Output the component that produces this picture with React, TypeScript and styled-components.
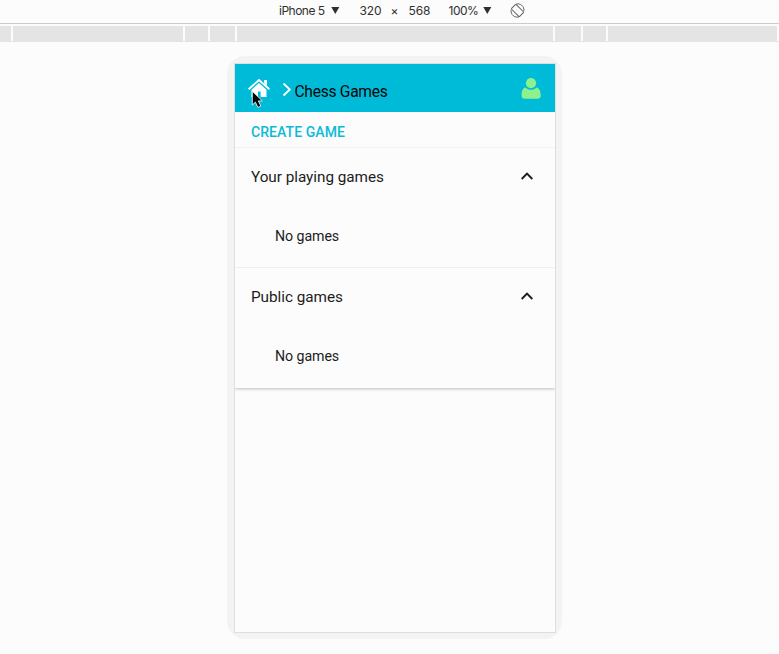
import React from 'react';
import styled, { createGlobalStyle } from 'styled-components';

const GlobalStyle = createGlobalStyle`
  * { box-sizing: border-box; }
  html, body { margin: 0; background: #fcfcfc; overflow: hidden; }
`;

const Page = styled.div`
  height: 654px;
  display: flex;
  flex-direction: column;
  align-items: center;
  background: #fcfcfc;
  font-family: Roboto, "Liberation Sans", sans-serif;
`;

const DeviceToolbar = styled.div`
  width: 100%;
  height: 24px;
  flex: none;
  display: flex;
  padding-left: 279px;
  border-bottom: 1px solid #cbcbcb;
  font: 12px/22px Inter, "Liberation Sans", sans-serif;
  color: #303030;
`;

const ToolLabel = styled.span<{ $width: number; $spacing?: number }>`
  flex: none;
  width: ${(p) => p.$width}px;
  letter-spacing: ${(p) => p.$spacing ?? 0}px;
  white-space: nowrap;
`;

const ToolIcon = styled.svg<{ $top: number; $gap?: number }>`
  display: block;
  flex: none;
  margin-top: ${(p) => p.$top}px;
  margin-right: ${(p) => p.$gap ?? 0}px;
`;

const BreakpointBar = styled.div`
  width: 100%;
  height: 16px;
  flex: none;
  margin-top: 2px;
  display: flex;
  gap: 2px;
  border-bottom: 1px solid #e4e4e4;
`;

const Breakpoint = styled.div<{ $width: number }>`
  flex: none;
  width: ${(p) => p.$width}px;
  background: #e4e4e4;
`;

const PhoneFrame = styled.div`
  width: 335px;
  height: 583px;
  flex: none;
  margin: 14px 0 0 10px;
  padding: 7px 6px 6px 7px;
  border-radius: 18px;
  background: #f3f3f3;
`;

const Screen = styled.div`
  width: 322px;
  height: 570px;
  border: 1px solid #dedede;
  background: #fcfcfc;
`;

const AppBar = styled.header`
  height: 48px;
  display: flex;
  background: #00bbd8;
`;

const HomeLink = styled.div`
  position: relative;
  width: 24px;
  height: 24px;
  margin: 13px 0 0 12px;
`;

const Pointer = styled.svg`
  position: absolute;
  left: 4px;
  top: 13px;
`;

const BarIcon = styled.svg<{ $top: number; $left: number }>`
  display: block;
  flex: none;
  margin: ${(p) => p.$top}px 0 0 ${(p) => p.$left}px;
`;

const Title = styled.h1`
  flex: 1;
  margin: 4px 0 0 2.5px;
  font-size: 15.6px;
  font-weight: 400;
  letter-spacing: -0.28px;
  line-height: 48px;
  color: #050505;
`;

const Card = styled.main`
  height: 276px;
  box-shadow: 0 1px 3px rgba(0, 0, 0, 0.25);
  clip-path: inset(0 0 -4px 0);
`;

const CreateButton = styled.button`
  display: block;
  width: 100%;
  height: 36px;
  padding: 5px 16px 0;
  border: 0;
  border-bottom: 1px solid #f1f1f1;
  background: none;
  text-align: left;
  font: 500 14px/31px Roboto, "Liberation Sans", sans-serif;
  letter-spacing: 0.07px;
  color: #0abbd6;
`;

const Section = styled.section`
  height: 120px;
  &:not(:last-child) { border-bottom: 1px solid #f0f0f0; }
`;

const SectionHeader = styled.div`
  height: 57px;
  display: flex;
  align-items: center;
  justify-content: space-between;
  padding: 0 21px 0 16px;
  font-size: 15.3px;
  letter-spacing: -0.03px;
  color: #1c1c1c;
`;

const EmptyText = styled.div`
  padding: 3px 0 0 40px;
  font-size: 14.2px;
  letter-spacing: -0.08px;
  line-height: 57px;
  color: #1c1c1c;
`;

const DropArrow = ({ gap }: { gap: number }) => (
  <ToolIcon $top={7} $gap={gap} width="9" height="8" viewBox="0 0 9 8">
    <path d="M.3 0h8L4.3 7z" fill="#303030" />
  </ToolIcon>
);

const GameSection = ({ title }: { title: string }) => (
  <Section>
    <SectionHeader>
      {title}
      <svg width="13" height="9" viewBox="0 0 13 9">
        <path d="M.7 7 6 1.7 11.300 7" fill="none" stroke="#1c1c1c" strokeWidth="1.9" />
      </svg>
    </SectionHeader>
    <EmptyText>No games</EmptyText>
  </Section>
);

const segments = [11, 170, 23, 25, 316, 26, 23, 169];

export default function App() {
  return (
    <Page>
      <GlobalStyle />
      <DeviceToolbar>
        <ToolLabel $width={51.5} $spacing={-0.5}>iPhone 5</ToolLabel>
        <DropArrow gap={20} />
        <ToolLabel $width={31} $spacing={-0.1}>320</ToolLabel>
        <ToolLabel $width={18}>×</ToolLabel>
        <ToolLabel $width={40} $spacing={-0.1}>568</ToolLabel>
        <ToolLabel $width={34.5} $spacing={-0.5}>100%</ToolLabel>
        <DropArrow gap={18} />
        <ToolIcon $top={3} width="15" height="15" viewBox="0 0 15 15" fill="none" stroke="#606060" strokeWidth="1">
          <rect x="4.2" y="1.8" width="6.6" height="11.4" rx="1" transform="rotate(-45 7.5 7.5)" />
          <path d="M6 1.1C10.5-.1 14.4 3.3 13.9 8M9 13.9C4.5 15.100.6 11.7 1.1 7" />
        </ToolIcon>
      </DeviceToolbar>
      <BreakpointBar>
        {segments.map((width, i) => <Breakpoint key={i} $width={width} />)}
      </BreakpointBar>
      <PhoneFrame>
        <Screen>
          <AppBar>
            <HomeLink>
              <svg width="24" height="24" viewBox="0 0 24 24">
                <path d="m1.6 12.200 10.400-9.200 10.400 9.200" fill="none" stroke="#fff" strokeWidth="1.9" />
                <path d="M17.200 3h2.800v6l-2.800-2.500zM12 6.100l7.500 6.600V20h-5.900v-5.500H11V20H4.500v-7.300z" fill="#fff" />
              </svg>
              <Pointer width="14" height="20" viewBox="0 0 14 20">
                <path d="M1.3 1.200v13.800l3.100-2.900 2.500 5.300 2.900-1.300-2.500-5.200h4z" fill="#050505" stroke="#fff" strokeWidth="0.8" />
              </Pointer>
            </HomeLink>
            <BarIcon $top={18} $left={11} width="10" height="15" viewBox="0 0 10 15">
              <path d="m1.5 1.5 6.3 6-6.300 6" fill="none" stroke="#fff" strokeWidth="1.8" />
            </BarIcon>
            <Title>Chess Games</Title>
            <BarIcon $top={14} $left={0} width="34" height="22" viewBox="0 0 34 22">
              <circle cx="10" cy="5.2" r="5.1" fill="#8df28d" />
              <path d="M4.5 9.5C7.5 12.6 12.5 12.6 15.5 9.5C18.5 10 19.7 13.5 19.7 17.5Q19.7 20.8 16.5 20.8H3.800Q.6 20.8.6 17.5C.6 13.5 1.5 10 4.5 9.5Z" fill="#8df28d" />
            </BarIcon>
          </AppBar>
          <Card>
            <CreateButton>CREATE GAME</CreateButton>
            <GameSection title="Your playing games" />
            <GameSection title="Public games" />
          </Card>
        </Screen>
      </PhoneFrame>
    </Page>
  );
}
